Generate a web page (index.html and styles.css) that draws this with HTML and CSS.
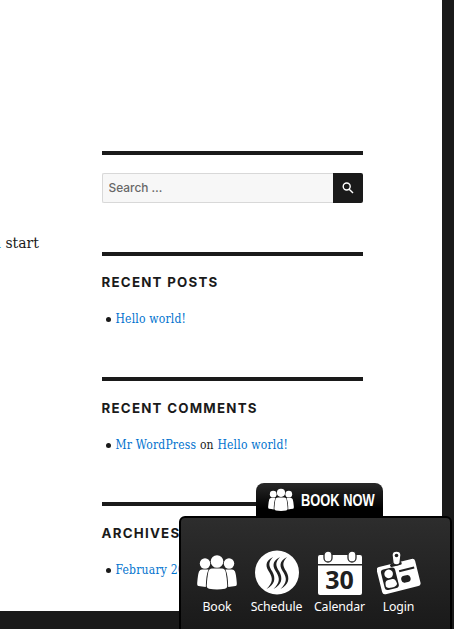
FILE: index.html
```
<!DOCTYPE html>
<html lang="en">
<head>
<meta charset="utf-8">
<title>Blog</title>
<link rel="stylesheet" href="styles.css">
</head>
<body>
<svg class="defs" aria-hidden="true">
  <symbol id="people" viewBox="0 0 40 35">
    <circle cx="8" cy="8.500" r="5.200"/><circle cx="32" cy="8.500" r="5.200"/><circle cx="20" cy="6.500" r="6.300"/>
    <path d="M5 14.500H11.500Q9 20 8.800 32Q5 31.500 1.500 31Q0 31 .2 28Q.8 20 2 16.500Q3 14.500 5 14.500ZM35 14.500H28.500Q31 20 31.200 32Q35 31.500 38.500 31Q40 31 39.800 28Q39.200 20 38 16.500Q37 14.500 35 14.500Z"/>
    <path d="M15 13.500H25Q28 13.500 28.700 17Q30 24 30.300 31Q30.300 33 28 33.800Q20 35 12 33.800Q9.700 33 9.700 31Q10 24 11.300 17Q12 13.500 15 13.500Z"/>
  </symbol>
</svg>
<div class="site">
  <main class="content"><p><a href="#">n</a> start</p></main>
  <aside class="sidebar">
    <section class="widget search-widget">
      <form class="search"><input type="text" placeholder="Search …" aria-label="Search"><button type="button" aria-label="Search"><svg viewBox="0 0 12 12"><circle cx="4.700" cy="4.500" r="3.500"/><path d="M7.200 7.200 11 11"/></svg></button></form>
    </section>
    <section class="widget">
      <h2>RECENT POSTS</h2>
      <ul><li><a href="#">Hello world!</a></li></ul>
    </section>
    <section class="widget">
      <h2>RECENT COMMENTS</h2>
      <ul><li><a href="#">Mr WordPress</a> on <a href="#">Hello world!</a></li></ul>
    </section>
    <section class="widget">
      <h2>ARCHIVES</h2>
      <ul><li><a href="#">February 2017</a></li></ul>
    </section>
  </aside>
</div>
<div class="booking">
  <div class="tab"><svg><use href="#people"/></svg><span>BOOK NOW</span></div>
  <nav class="panel">
    <a class="item book"><svg class="people"><use href="#people"/></svg><span>Book</span></a>
    <a class="item schedule"><svg viewBox="0 0 44 44"><circle cx="22" cy="22" r="22"/><g class="ink"><path id="wave" d="M18 6.500C9.500 11 10.500 16 14.500 22C18 28 18 32 11.500 38.500C20 34 21 28 17.300 21C13.500 15 13 12 18 6.500Z"/><use href="#wave" x="7"/><use href="#wave" x="14"/></g></svg><span>Schedule</span></a>
    <a class="item calendar"><div class="cal"><svg viewBox="0 0 44 45"><path d="M2 5H42Q44 5 44 7V14H0V7Q0 5 2 5ZM0 15.500H44V43Q44 45 42 45H2Q0 45 0 43Z"/><g class="ring"><rect x="6" y="1" width="8" height="11" rx="4"/><rect x="30" y="1" width="8" height="11" rx="4"/></g></svg><b>30</b></div><span>Calendar</span></a>
    <a class="item login"><svg viewBox="0 0 44 45"><g transform="rotate(-14 22 27)"><rect x="2" y="12.500" width="39.500" height="28" rx="3"/><rect class="ink" x="5.500" y="16" width="14.500" height="21" rx="3"/><circle cx="12.700" cy="21.500" r="4.300"/><path d="M7 33Q7 27.300 10 27.300H15Q18.300 27.300 18.500 33Q17.500 35.500 12.700 35.500Q7.500 35.500 7 33Z"/><path class="ink" d="M23.500 20.500H39V22.500H23.500Z"/><rect class="ink" x="23.500" y="27" width="9.500" height="7" rx="3.500"/><rect class="ink" x="16" y="12.500" width="12" height="3" rx="1.500"/></g><path class="clip" d="M19.500 1Q24 1 24 5L23 13Q22 15 19.500 15Q17 15 16 13L15 5Q15 1 19.500 1Z"/><circle class="ink" cx="19.500" cy="5.500" r="1.800"/></svg><span>Login</span></a>
  </nav>
</div>
</body>
</html>
```
FILE: styles.css
```
* { box-sizing: border-box; }
html, body { height: 100%; }
body { margin: 0; background: #1a1a1a; color: #1a1a1a; overflow: hidden; }
.defs { position: absolute; width: 0; height: 0; }
.site {
  display: grid;
  grid-template-columns: 101.5px 261.5px;
  width: 442px;
  height: 611px;
  background: #fff;
  overflow: hidden;
}
a { color: #0072ce; text-decoration: none; }
.content { padding-top: 231px; }
.content p {
  margin: 0 0 0 -8px;
  font: 15.5px/24px "DejaVu Serif", serif;
  font-stretch: condensed;
  white-space: nowrap;
}
.sidebar { padding-top: 151.3px; }
.widget { height: 125.4px; border-top: 4px solid #1a1a1a; }
.search-widget { height: 100.4px; padding-top: 17.5px; }
.search { display: flex; height: 30px; }
.search input {
  flex: 1;
  min-width: 0;
  padding: 0 6px;
  border: 1px solid #d8d8d8;
  border-right: 0;
  border-radius: 2px 0 0 2px;
  background: #f7f7f7;
  font: 500 11.9px "Inter", sans-serif;
}
.search input::placeholder { color: #686868; opacity: 1; }
.search button {
  display: grid;
  place-items: center;
  width: 30px;
  padding: 0;
  border: 0;
  border-radius: 0 2px 2px 0;
  background: #1a1a1a;
}
.search button svg { width: 12px; height: 12px; fill: none; stroke: #fff; stroke-width: 1.4; }
h2 { margin: 0; padding-top: 18.5px; font: 700 13.3px/17px "Inter", sans-serif; letter-spacing: 1.25px; white-space: nowrap; }
ul {
  margin: 18px 0 0;
  padding-left: 14px;
  list-style: none;
  font: 12px/20px "DejaVu Serif", serif;
  font-stretch: condensed;
  letter-spacing: .2px;
  white-space: nowrap;
}
li { display: flex; align-items: center; white-space: pre; }
li::before { content: ""; width: 5px; height: 5px; margin: 1px 5px 0 -10px; border-radius: 50%; background: #1a1a1a; }
.booking {
  position: absolute;
  left: 179px;
  top: 483px;
  width: 273px;
  height: 146px;
}
.tab {
  display: flex;
  align-items: center;
  gap: 7px;
  width: 127px;
  height: 34px;
  margin-left: 77px;
  padding-left: 12px;
  border-radius: 8px 8px 0 0;
  background: linear-gradient(#292929, #000 75%);
  color: #fff;
}
.tab svg { flex: none; width: 26px; height: 24px; fill: #fff; }
.tab span { font: 700 16.5px "Liberation Sans", sans-serif; white-space: nowrap; transform: scaleX(.78); transform-origin: left; }
.panel {
  display: flex;
  height: 118px;
  margin-top: -1px;
  padding: 32px 0 0 6px;
  border: 2px solid #000;
  border-radius: 6px 6px 0 0;
  background: linear-gradient(#2d2d2d, #191919);
}
.item { display: flex; flex-direction: column; align-items: center; width: 60px; color: #fff; }
.item > svg, .cal { width: 44px; height: 45px; fill: #fff; }
.item > .people { width: 40px; height: 35px; margin: 5px 0; }
.item > span { margin-top: 3px; font: 12.3px/17px "Noto Sans", sans-serif; letter-spacing: -.1px; }
.schedule { width: 59px; }
.calendar { width: 67px; }
.login { width: 51px; }
.ink { fill: #202020; }
.ring, .clip { stroke: #262626; stroke-width: 1.3; }
.cal { display: grid; }
.cal svg, .cal b { grid-area: 1 / 1; }
.cal b { padding-top: 16px; font: 700 25px/26px "Noto Sans", sans-serif; text-align: center; color: #202020; }
```
